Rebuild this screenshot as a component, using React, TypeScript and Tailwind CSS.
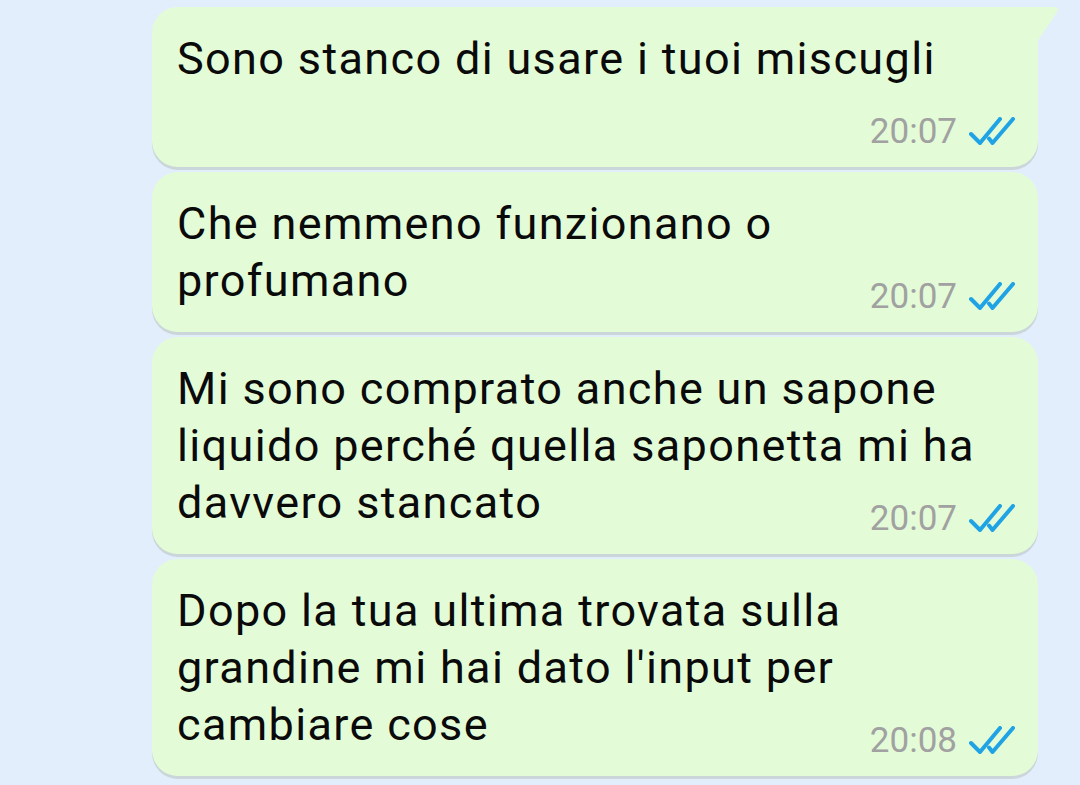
import React from 'react';

const messages = [
  { lines: ['Sono stanco di usare i tuoi miscugli'], time: '20:07', tail: true },
  { lines: ['Che nemmeno funzionano o', 'profumano'], time: '20:07' },
  { lines: ['Mi sono comprato anche un sapone', 'liquido perché quella saponetta mi ha', 'davvero stancato'], time: '20:07' },
  { lines: ['Dopo la tua ultima trovata sulla', "grandine mi hai dato l'input per", 'cambiare cose'], time: '20:08' },
];

function DoubleCheck() {
  return (
    <svg width="46" height="28" viewBox="0 0 46 28" fill="none" stroke="#1fa3e5" strokeWidth="4" strokeLinecap="round" strokeLinejoin="round">
      <path d="M2 17 L11 26 L31 2" />
      <path d="M20 21.5 L23.5 26 L44 2" />
    </svg>
  );
}

function Bubble({ lines, time, tail }: { lines: string[]; time: string; tail?: boolean }) {
  return (
    <div
      className={`relative w-full bg-[#e3fcd7] rounded-[26px] ${tail ? 'rounded-tr-none' : ''} px-[25px] pt-[23px] pb-[23px] shadow-[0_3px_0_#cbd6da]`}
    >
      {tail && (
        <svg className="absolute top-0 right-[-22px]" width="23" height="36" viewBox="0 0 23 36">
          <path d="M0 0 L17 0 Q23 0 20 5 L0 35 Z" fill="#e3fcd7" />
        </svg>
      )}
      <p className="text-[45px] leading-[57px] tracking-[1.35px] text-[#0a0a0a] font-['Roboto',sans-serif]">
        {lines.map((l, i) => (
          <React.Fragment key={i}>
            {l}
            {i < lines.length - 1 && <br />}
          </React.Fragment>
        ))}
        <span className="inline-block w-[160px] h-[1px]" />
      </p>
      <div className="absolute right-[23px] bottom-[21px] flex items-end gap-[12px]">
        <span className="text-[35px] leading-[28px] text-[#a1a1a1] font-['Roboto',sans-serif]">{time}</span>
        <div className="mb-[1px]">
          <DoubleCheck />
        </div>
      </div>
    </div>
  );
}

export default function App() {
  return (
    <div className="w-[1080px] h-[785px] overflow-hidden bg-[#e3eefd] pl-[152px] pr-[42px] pt-[7px] flex flex-col gap-[5px]">
      {messages.map((m, i) => (
        <Bubble key={i} {...m} />
      ))}
    </div>
  );
}
